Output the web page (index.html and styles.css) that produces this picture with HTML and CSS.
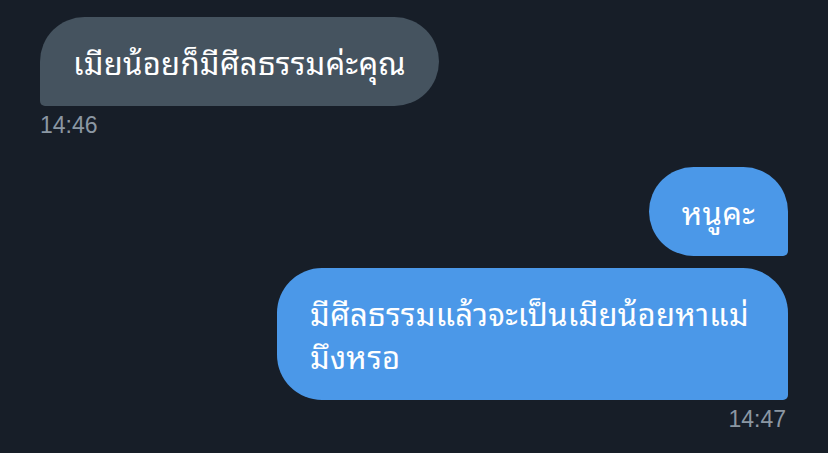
FILE: index.html
```html
<!DOCTYPE html>
<html lang="th">
<head>
<meta charset="utf-8">
<link rel="stylesheet" href="styles.css">
<title>Chat</title>
</head>
<body>
<div class="chat">
  <div class="msg received">
    <div class="bubble">เมียน้อยก็มีศีลธรรมค่ะคุณ</div>
    <div class="time">14:46</div>
  </div>
  <div class="msg sent first">
    <div class="bubble">หนูคะ</div>
  </div>
  <div class="msg sent">
    <div class="bubble wide">มีศีลธรรมแล้วจะเป็นเมียน้อยหาแม่<br>มึงหรอ</div>
    <div class="time">14:47</div>
  </div>
</div>
</body>
</html>
```
FILE: styles.css
```css
html, body {
  margin: 0;
  padding: 0;
  background: #171e28;
  height: 100%;
}
.chat {
  display: flex;
  flex-direction: column;
  padding: 17px 40px 0 40px;
  font-family: "Noto Sans Thai Looped", "Noto Sans Thai", "Loma", "Garuda", "Tlwg Typo", "Noto Sans", "DejaVu Sans", sans-serif;
}
.msg {
  display: flex;
  flex-direction: column;
}
.received { align-items: flex-start; }
.sent { align-items: flex-end; }
.sent.first { margin-top: 28px; margin-bottom: 12px; }
.bubble {
  box-sizing: border-box;
  padding: 23px 33px;
  font-size: 31px;
  line-height: 43px;
  letter-spacing: 0.3px;
  color: #ffffff;
  border-radius: 45px;
  white-space: nowrap;
}
.received .bubble {
  background: #45535f;
  border-bottom-left-radius: 5px;
}
.sent .bubble {
  background: #4b98e8;
  border-bottom-right-radius: 5px;
}
.bubble.wide {
  width: 511px;
}
.time {
  font-family: "Liberation Sans", Arial, sans-serif;
  font-size: 23px;
  line-height: 27px;
  color: #8b97a3;
  margin-top: 6px;
}
.sent .time { margin-right: 2px; }
```
